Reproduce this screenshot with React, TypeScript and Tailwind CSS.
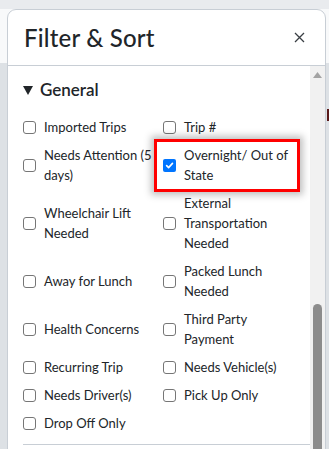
import React from "react";

type Item = { label: React.ReactNode; checked?: boolean; highlight?: boolean };

const rows: [Item, Item | null][] = [
  [{ label: "Imported Trips" }, { label: "Trip #" }],
  [
    { label: <>Needs Attention (5<br />days)</> },
    { label: <>Overnight/ Out of<br />State</>, checked: true, highlight: true },
  ],
  [
    { label: <>Wheelchair Lift<br />Needed</> },
    { label: <>External<br />Transportation<br />Needed</> },
  ],
  [{ label: "Away for Lunch" }, { label: <>Packed Lunch<br />Needed</> }],
  [{ label: "Health Concerns" }, { label: <>Third Party<br />Payment</> }],
  [{ label: "Recurring Trip" }, { label: "Needs Vehicle(s)" }],
  [{ label: "Needs Driver(s)" }, { label: "Pick Up Only" }],
  [{ label: "Drop Off Only" }, null],
];

function Check({ item }: { item: Item }) {
  return (
    <label className="relative flex items-center gap-2">
      {item.checked ? (
        <span className="flex h-[13px] w-[13px] shrink-0 items-center justify-center rounded-[2px] bg-[#0075ff]">
          <svg width="9" height="9" viewBox="0 0 10 10">
            <path d="M1.8 5.2 L4 7.4 L8.3 2.6" fill="none" stroke="white" strokeWidth="1.8" strokeLinecap="round" strokeLinejoin="round" />
          </svg>
        </span>
      ) : (
        <span className="h-[13px] w-[13px] shrink-0 rounded-[3px] border border-[#767676] bg-white" />
      )}
      <span className="text-[13px] leading-[20px] text-[#212529]">{item.label}</span>
      {item.highlight && (
        <span className="pointer-events-none absolute -top-[6px] -bottom-[7px] -left-[9px] right-[10px] border-[3px] border-[#ff0000] shadow-[0_0_7px_3px_rgba(0,0,0,0.25)]" />
      )}
    </label>
  );
}

export default function App() {
  return (
    <div className="relative h-[449px] w-[329px] overflow-hidden font-['Lato',sans-serif]">
      {/* page behind the dialog */}
      <div className="h-[9px] bg-[#e9ebee]" />
      <div className="h-[54px] bg-[#f8f9fa]" />
      <div className="flex h-[386px] justify-end bg-[#dde1e5] pt-[46px]">
        <div className="h-[12px] w-[2px] bg-[#5a1a1a]" />
      </div>

      {/* dialog */}
      <div className="absolute left-[7px] top-[9px] h-[460px] w-[319px] rounded-t-[9px] border border-[#c8ced5] bg-white">
        <div className="flex h-[56px] items-center justify-between border-b border-[#c8ced5] pl-4 pr-[20px]">
          <h2 className="text-[24px] font-medium tracking-[0.2px] text-[#212529]">Filter &amp; Sort</h2>
          <svg width="11" height="11" viewBox="0 0 11 11">
            <path d="M1 1 L10 10 M10 1 L1 10" stroke="#3a3f44" strokeWidth="1.3" />
          </svg>
        </div>

        <div className="flex h-[400px]">
          <div className="flex-1 pl-[15px] pt-[12px]">
            <div className="flex items-center gap-[7px] text-[17px] font-semibold leading-[24px] text-[#212529]">
              <svg width="10" height="9" viewBox="0 0 10 9">
                <path d="M0 0 H10 L5 9 Z" fill="#212529" />
              </svg>
              General
            </div>
            <div className="mt-[15px] grid grid-cols-[140px_1fr] gap-y-2">
              {rows.map(([a, b], i) => (
                <React.Fragment key={i}>
                  <Check item={a} />
                  {b ? <Check item={b} /> : <div />}
                </React.Fragment>
              ))}
            </div>
            <div className="mt-[11px] border-t border-[#c8ced5]" />
          </div>

          {/* scrollbar */}
          <div className="flex w-[15px] flex-col items-center bg-[#f1f1f1] pt-[6px]">
            <svg width="9" height="6" viewBox="0 0 9 6">
              <path d="M0 6 L4.5 0 L9 6 Z" fill="#a3a3a3" />
            </svg>
            <div className="mt-[226px] h-[160px] w-[9px] rounded-t-full bg-[#8c8c8c]" />
          </div>
        </div>
      </div>
    </div>
  );
}
